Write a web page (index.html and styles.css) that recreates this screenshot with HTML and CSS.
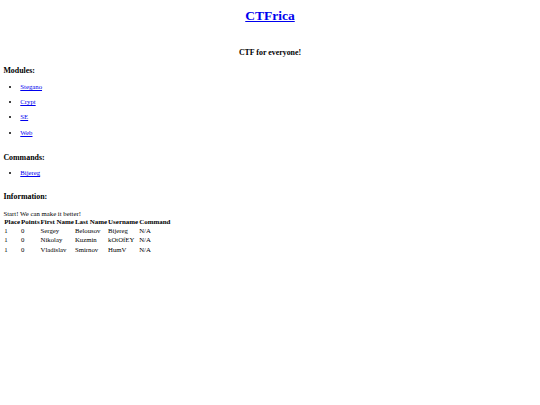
FILE: index.html
```html
<!DOCTYPE html>
<html>
<head>
<meta charset="utf-8">
<title>CTFrica</title>
<link rel="stylesheet" href="styles.css">
</head>
<body>
<h1 class="title"><a href="#">CTFrica</a></h1>
<h3 class="tagline">CTF for everyone!</h3>
<h3 class="section modules-title">Modules:</h3>
<ul class="list modules">
  <li><a href="#">Stegano</a></li>
  <li><a href="#">Crypt</a></li>
  <li><a href="#">SE</a></li>
  <li><a href="#">Web</a></li>
</ul>
<h3 class="section commands-title">Commands:</h3>
<ul class="list commands">
  <li><a href="#">Bijereg</a></li>
</ul>
<h3 class="section info-title">Information:</h3>
<p class="note">Start! We can make it better!</p>
<table class="scores">
  <thead>
    <tr><th>Place</th><th>Points</th><th>First Name</th><th>Last Name</th><th>Username</th><th>Command</th></tr>
  </thead>
  <tbody>
    <tr><td>1</td><td>0</td><td>Sergey</td><td>Belousov</td><td>Bijereg</td><td>N/A</td></tr>
    <tr><td>1</td><td>0</td><td>Nikolay</td><td>Kuzmin</td><td>kOtOfEY</td><td>N/A</td></tr>
    <tr><td>1</td><td>0</td><td>Vladislav</td><td>Smirnov</td><td>HumV</td><td>N/A</td></tr>
  </tbody>
</table>
</body>
</html>
```
FILE: styles.css
```css
html, body {
  background: #fff;
}
body {
  margin: 0;
  padding: 0 3.4px;
  font-family: "Liberation Serif", "Times New Roman", serif;
  font-size: 6.75px;
  line-height: 7.75px;
  color: #000;
}
a {
  color: #0000ee;
  text-decoration: underline;
}
.title {
  margin: 8px 0 0;
  text-align: center;
  font-size: 13.5px;
  line-height: 16px;
  font-weight: bold;
}
.tagline {
  margin: 23.7px 0 0;
  text-align: center;
  font-size: 7.9px;
  line-height: 10px;
  font-weight: bold;
}
.section {
  margin: 0;
  font-size: 7.9px;
  line-height: 10px;
  font-weight: bold;
}
.modules-title { margin-top: 8.3px; }
.commands-title { margin-top: 16px; }
.info-title { margin-top: 14.4px; }
.list {
  margin: 0;
  padding-left: 16.9px;
  list-style: disc;
}
.list li {
  line-height: 8px;
}
.modules { margin-top: 7.3px; }
.modules li + li { margin-top: 7.1px; }
.commands { margin-top: 6.6px; }
.note {
  margin: 8.3px 0 0;
  line-height: 8px;
}
.scores {
  border-collapse: separate;
  border-spacing: 0.84px;
  margin-top: -0.6px;
  margin-left: 0.4px;
}
.scores th,
.scores td {
  padding: 0.5px 0.5px;
  text-align: left;
  line-height: 8.3px;
  font-size: 6.75px;
}
.scores th {
  font-weight: bold;
  font-size: 6.95px;
}
.scores td { font-weight: normal; }
```
